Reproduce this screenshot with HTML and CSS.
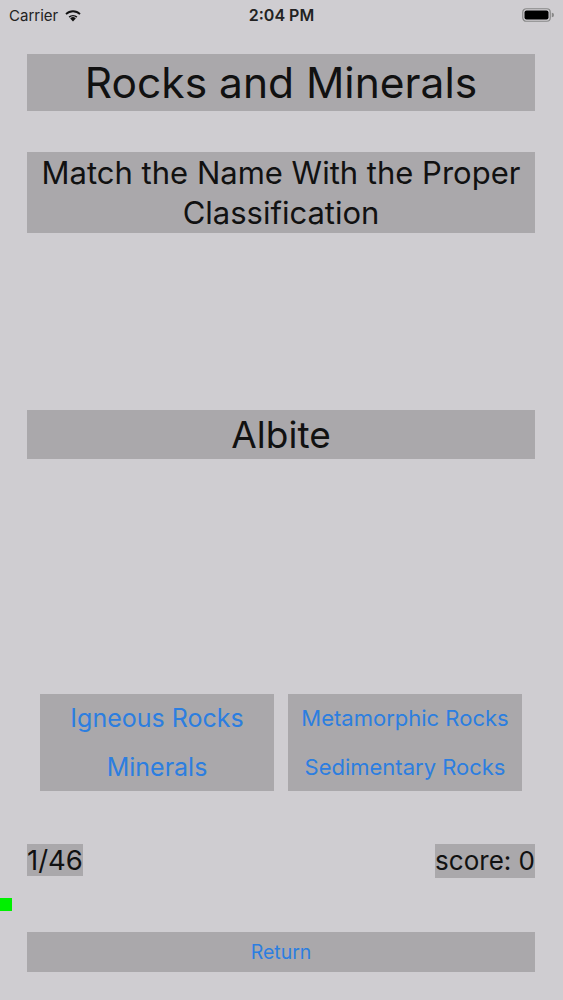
FILE: index.html
```html
<!DOCTYPE html>
<html>
<head>
<meta charset="utf-8">
<link rel="stylesheet" href="styles.css">
</head>
<body>
<div class="status">
  <div class="status-left">
    <span class="carrier">Carrier</span>
    <svg class="wifi" width="18" height="13" viewBox="0 0 18 13">
      <path d="M9 12.5 L6.2 9.4 A4 4 0 0 1 11.8 9.4 Z" fill="#111"/>
      <path d="M4.6 7.6 A6.5 6.5 0 0 1 13.4 7.6 L12.3 8.8 A5 5 0 0 0 5.7 8.8 Z" fill="#111"/>
      <path d="M1.4 4.5 A10.8 10.8 0 0 1 16.6 4.5 L15.4 5.8 A9.1 9.1 0 0 0 2.6 5.8 Z" fill="#111"/>
    </svg>
  </div>
  <div class="time">2:04 PM</div>
  <div class="status-right">
    <svg width="32" height="14" viewBox="0 0 32 14">
      <rect x="0.75" y="0.75" width="27.5" height="12.5" rx="3.5" fill="none" stroke="#888" stroke-width="1.2"/>
      <rect x="2.5" y="2.5" width="24" height="9" rx="2" fill="#000"/>
      <path d="M29.8 4.8 A2 2 0 0 1 29.8 9.2 Z" fill="#888"/>
    </svg>
  </div>
</div>
<main class="screen">
  <div class="title box">Rocks and Minerals</div>
  <div class="subtitle box">Match the Name With the Proper Classification</div>
  <div class="word box">Albite</div>
  <div class="choices">
    <div class="choice box">
      <span class="link big">Igneous Rocks</span>
      <span class="link big">Minerals</span>
    </div>
    <div class="choice box">
      <span class="link small">Metamorphic Rocks</span>
      <span class="link small">Sedimentary Rocks</span>
    </div>
  </div>
  <div class="stats">
    <span class="count box">1/46</span>
    <span class="score box">score: 0</span>
  </div>
  <div class="progress"></div>
  <div class="return box">Return</div>
</main>
</body>
</html>
```

FILE: styles.css
```css
html, body {
  margin: 0;
  padding: 0;
}
body {
  width: 563px;
  height: 1000px;
  background: #cfcdd1;
  font-family: Inter, "Liberation Sans", sans-serif;
  color: #111;
  overflow: hidden;
}
.status {
  height: 30px;
  display: flex;
  align-items: center;
  justify-content: space-between;
  padding: 0 9px 0 9px;
  font-size: 15px;
}
.status-left {
  display: flex;
  align-items: center;
  gap: 6px;
  width: 120px;
}
.carrier {
  color: #222;
}
.time {
  font-weight: 600;
  font-size: 16px;
  color: #222;
}
.status-right {
  width: 120px;
  display: flex;
  justify-content: flex-end;
}
.screen {
  padding: 0 28px 0 27px;
  display: flex;
  flex-direction: column;
}
.box {
  background: #aaa8ab;
}
.title {
  margin-top: 24px;
  height: 57px;
  display: flex;
  align-items: center;
  justify-content: center;
  font-size: 42.5px;
}
.subtitle {
  margin-top: 41px;
  height: 81px;
  display: flex;
  align-items: center;
  justify-content: center;
  text-align: center;
  font-size: 31px;
  line-height: 40px;
  padding: 0 6px;
}
.word {
  margin-top: 177px;
  height: 49px;
  display: flex;
  align-items: center;
  justify-content: center;
  font-size: 37px;
}
.choices {
  margin-top: 235px;
  padding: 0 13px;
  display: flex;
  gap: 14px;
}
.choice {
  flex: 1;
  height: 97px;
  display: flex;
  flex-direction: column;
  align-items: center;
  justify-content: center;
}
.link {
  color: #2c7ee0;
  height: 49px;
  line-height: 49px;
  white-space: nowrap;
}
.big {
  font-size: 25px;
}
.small {
  font-size: 22px;
}
.stats {
  margin-top: 53px;
  display: flex;
  justify-content: space-between;
  align-items: flex-start;
}
.count {
  height: 32px;
  line-height: 32px;
  font-size: 27.5px;
}
.score {
  height: 34px;
  line-height: 34px;
  font-size: 26px;
}
.progress {
  margin-top: 20px;
  margin-left: -27px;
  width: 12px;
  height: 13px;
  background: #00f000;
}
.return {
  margin-top: 21px;
  height: 40px;
  display: flex;
  align-items: center;
  justify-content: center;
  color: #2c7ee0;
  font-size: 19.5px;
}
```
